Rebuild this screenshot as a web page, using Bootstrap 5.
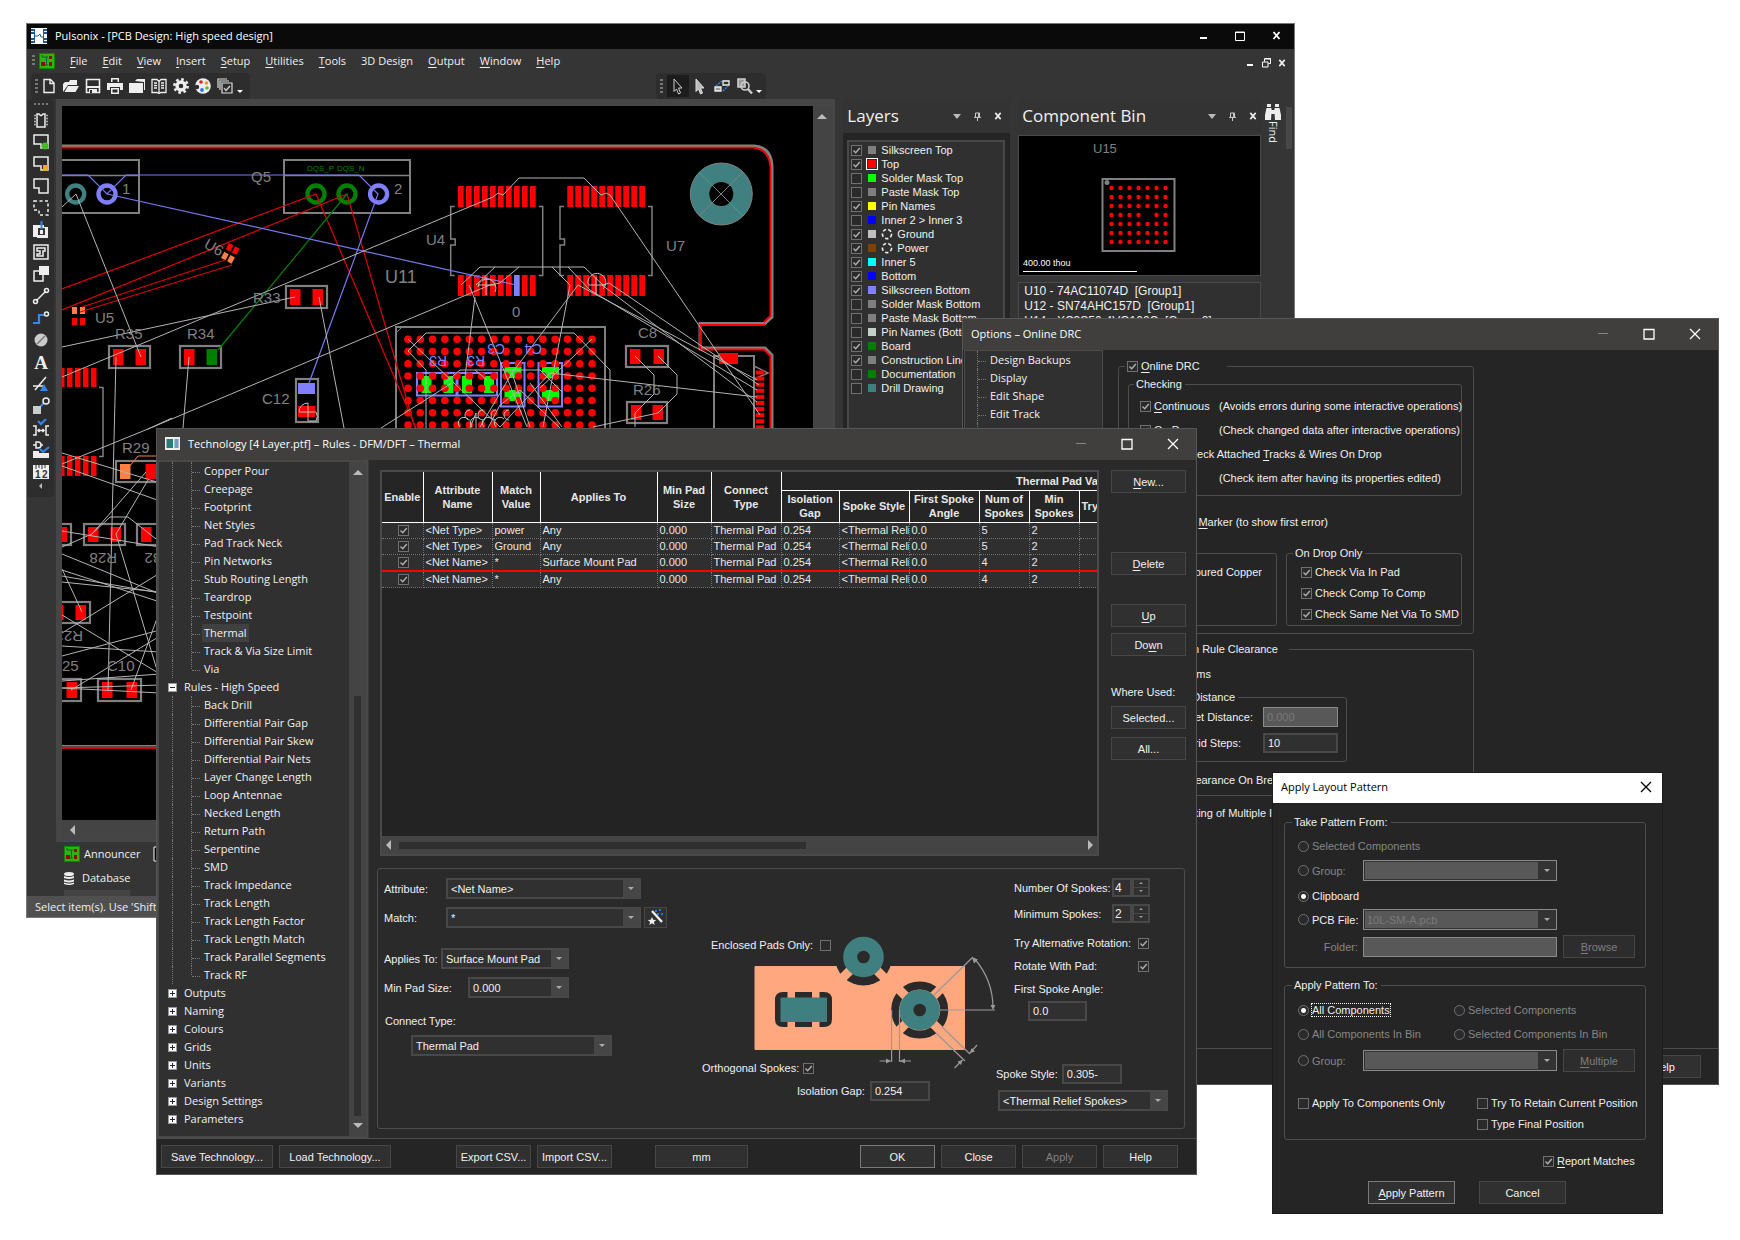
<!DOCTYPE html>
<html lang="en">
<head>
<meta charset="utf-8">
<meta name="viewport" content="width=device-width, initial-scale=1">
<title>Pulsonix</title>
<link href="https://cdn.jsdelivr.net/npm/bootstrap@5.3.0/dist/css/bootstrap.min.css" rel="stylesheet">
<style>
:root{--ui:"Open Sans","Noto Sans",sans-serif;--dlg:"Liberation Sans",Arial,sans-serif}
body{background:#fff;color:#f0f0f0;font-family:var(--dlg);font-size:11px;line-height:12px;min-height:1240px;position:relative;overflow-x:hidden}
svg{display:block;flex:none}
.win{position:absolute;border:1px solid #555;background:#252525}
.win-main{left:26px;right:445px;top:23px;background:#353535;border-color:#777}
.win-opt{left:962px;right:21px;top:318px}
.win-tech{left:156px;right:543px;top:428px;background:#2a2a2a}
.win-apply{right:77px;width:391px;top:772px;border-color:#1c1c1c}
.ui{font-family:var(--ui);font-size:11px;line-height:18px}
.tbar{height:31px;padding-bottom:2px;background:#403f3e;font-family:var(--ui);font-size:11px;color:#fff}
.win-main>.tbar{height:25px;background:#0a0a0a}
.win-apply>.tbar{height:30px;background:#fff;color:#000}
.wbtn{background:none;border:0;padding:0;color:inherit;display:flex;align-items:center;justify-content:center;width:16px;height:16px}
.caps{display:flex;gap:30px;margin-right:7px}
.win-main .caps{gap:20px;margin-right:10px}
.menubar{height:24px;font-family:var(--ui);font-size:11px;gap:15px;padding-left:5px}
.menubar a,.tree a{color:#f0f0f0;text-decoration:none}
u{text-underline-offset:2px}
.strip{background:#2d2d2d;border-radius:4px}
.tools{height:26px}
.vtools{width:27px;height:398px}
.vtools .wbtn,.tools .wbtn{width:22px;height:22px}
.grip{width:3px;height:15px;background:repeating-linear-gradient(#777 0 2px,transparent 2px 4px)}
.gript{height:2px;width:14px;background:repeating-linear-gradient(90deg,#777 0 2px,transparent 2px 4px)}
.frame{background:#464646;padding:7px 3px 3px 6px}
.board{background:#000;min-width:0}
.board text{font-family:var(--dlg)}
.sb{background:#444}
.pane-h{height:34px;font-family:var(--ui);font-size:17px;background:#333}
.layers{width:167px;background:#252525}
.llist{border:2px solid #484848;background:#303030;margin:7px 5px 0 4px;padding:1px 2px}
.llist label{display:flex;align-items:center;height:14px;white-space:nowrap;overflow:hidden;font-size:11px}
.sw{width:8px;height:8px;margin:0 5px 0 6px;flex:none}
.sw.cur{outline:1px solid #fff;outline-offset:1px}
.ck,.rd{appearance:none;width:11px;height:11px;border:1px solid #707070;background:#2a2a2a center/9px no-repeat;margin:0;flex:none;display:inline-block;vertical-align:middle}
.ck:checked{background-image:url("data:image/svg+xml,%3Csvg xmlns='http://www.w3.org/2000/svg' viewBox='0 0 9 9'%3E%3Cpath d='M1.5 4.5l2.2 2.2L7.8 2' fill='none' stroke='%23b0b0b0' stroke-width='1.4'/%3E%3C/svg%3E")}
.rd{border-radius:50%}
.rd:checked{background-image:radial-gradient(#fff 0 2px,transparent 3px)}
.ckl{display:flex;align-items:center;gap:3px;height:12px;white-space:nowrap;flex-shrink:0}
.dim{color:#868686}
.btnx{background:#303030;border:1px solid #464646;border-radius:0;color:#f0f0f0;font-family:var(--dlg);font-size:11px;line-height:14px;height:23px;padding:0 2px;white-space:nowrap}
.btnx.def{border-color:#7a7a7a}
.btnx:disabled{color:#7f7f7f;opacity:1;border-color:#464646;background:#2d2d2d}
.w75{width:75px}
.inx,.selx{background:#303030;border:2px solid #484848;border-radius:0;color:#f0f0f0;font-family:var(--dlg);font-size:11px;line-height:14px;height:20px;padding:0 3px;min-width:0}
.inx:disabled,.selx:disabled{background-color:#585858;border:1px solid #8a8a8a;color:#7a7a7a;opacity:1}
.selx{appearance:none;height:21px;background:linear-gradient(#464646,#464646) right/16px 100% no-repeat,#303030}
.selx:disabled{background:linear-gradient(#333,#333) right/18px 100% no-repeat,#585858;box-shadow:inset 0 0 0 1px #333}
.selw{position:relative;display:flex}
.selw::after{content:"";position:absolute;right:7px;top:9px;border:3px solid transparent;border-top-color:#aaa;border-bottom:0}
.selw>select{width:100%}
.spin{background:#484848;padding:2px;height:19px}
.spin input{width:16px;height:15px;border:0;background:#303030;color:#f0f0f0;padding:0 1px;font-size:12px;appearance:textfield}
.spin i{display:block;width:14px;height:7px;background:#303030;position:relative}
.spin i::after{content:"";position:absolute;left:5px;top:2px;border:2px solid transparent;border-top-color:#999;border-bottom:0}
.spin i.up::after{border:2px solid transparent;border-bottom-color:#999;border-top:0}
.gb{border:1px solid #4c4c4c;border-radius:3px;min-width:0}
.gb>legend{float:none;width:auto;font-size:11px;line-height:12px;margin:0 0 0 7px;padding:0 3px 0 2px}
.gb>legend span.hid{display:inline-block;text-align:right}
/* trees */
.tree{margin:0;padding:0;list-style:none;font-family:var(--ui);font-size:11px;line-height:18px;white-space:nowrap}
.tree li{height:18px;display:flex;align-items:center}
.tree .kid{padding-left:13px}
.tree .kid::before{content:"";align-self:stretch;width:1px;border-left:1px dotted #777;margin-right:18px}
.tree .br{align-self:stretch;border-left:1px dotted #777;width:11px;position:relative}
.tree .br::after{content:"";position:absolute;left:0;right:2px;top:10px;border-top:1px dotted #777}
.tree .kid.end .br{border-left-color:transparent;background:repeating-linear-gradient(#777 0 1px,transparent 1px 2px) 0 0/1px 10px no-repeat border-box}
.tree .flat{padding-left:12px}
.tree .top{padding-left:9px}
.exp{width:9px;height:9px;background:#fff;border:1px solid #999;position:relative;margin-right:7px}
.exp::before{content:"";position:absolute;left:1px;right:1px;top:3px;height:1px;background:#225}
.exp.plus::after{content:"";position:absolute;top:1px;bottom:1px;left:3px;width:1px;background:#225}
.tree .on{background:#404040}
.tree a{padding:0 2px}
.tree-opt{width:139px;border:1px solid #4a4a4a;background:#303030;margin:0 1px 1px;flex:none}
.tgrid{border:2px solid #4a4a4a;background:#232323;height:386px;overflow:hidden}
.tgrid table{table-layout:fixed;width:973px;border-collapse:collapse;font-size:11px;line-height:14px;color:#e8e8e8}
.tgrid th{border:1px solid #fff;border-top:0;border-left:0;text-align:center;padding:0;vertical-align:middle;white-space:nowrap;background:#252525}
.tgrid td{height:16px;padding:0 0 0 2px;border-right:1px dotted #777;border-bottom:1px dotted #777;white-space:nowrap;overflow:hidden;line-height:15px;background:#2f2f2f}
.tgrid tr.red td{border-bottom:2px solid #f00}
.hs{height:18px;background:#444}
.tri{width:0;height:0;border:5px solid transparent}
.tri.u{border-bottom-color:#bbb;border-top:0}.tri.d{border-top-color:#bbb;border-bottom:0}
.tri.l{border-right-color:#bbb;border-left:0}.tri.r{border-left-color:#bbb;border-right:0}
.over{display:grid}.over>*{grid-area:1/1}
.foot{border-top:1px solid #4c4c4c;background:#252525;height:36px;padding:6px 0}
.nw{white-space:nowrap}
</style>
</head>
<body>
<svg width="0" height="0" class="position-absolute"><defs>
<symbol id="x" viewBox="0 0 12 12"><path d="M1 1l10 10M11 1L1 11" stroke="currentColor" stroke-width="1.3" fill="none"/></symbol>
<symbol id="xb" viewBox="0 0 9 9"><path d="M1.500 1l6 7M7.500 1L1.500 8" stroke="currentColor" stroke-width="1.800" fill="none"/></symbol>
<symbol id="sq" viewBox="0 0 12 12"><path d="M1 1.5h10v9.5H1z" stroke="currentColor" stroke-width="1.3" fill="none"/></symbol>
<symbol id="pin" viewBox="0 0 9 9"><path d="M2.5 1h4v4M2.5 1v4M5.6 1v4M1 5.4h7M4.5 5v4" stroke="#ccc" fill="none"/></symbol>
<symbol id="pcb" viewBox="0 0 16 16"><path fill="#2fb40e" stroke="#0a8a04" d="M.5.5h15v15H.5z"/><path fill="#900" d="M2 9h4v4H2zM10 3h3v3h-3zM10 9h3v4h-3z"/><path d="M2 3h2v2M6 12h3M7.500 4v8M5 4h4" stroke="#064" fill="none"/></symbol>
<symbol id="ring" viewBox="0 0 12 12"><circle cx="6" cy="6" r="4.6" fill="none" stroke="#eee" stroke-width="1.6" stroke-dasharray="3.4 2.2"/></symbol>
</defs></svg>

<!-- Main application window -->
<section class="win win-main">
 <header class="tbar d-flex align-items-center ps-1">
  <svg width="16" height="16" viewBox="0 0 16 16"><path fill="#fff" d="M0 0h16v16H0z"/><path fill="#1c5a96" d="M0 1h3v2H0zM0 4h3v2H0zM0 10h3v2H0zM0 13h3v2H0zM13 1h3v2h-3zM13 4h3v2h-3zM13 10h3v2h-3zM13 13h3v2h-3zM3 1h1v14H3zM12 1h1v14h-1z"/><path d="M4 8h3l2-2 1 3h2" stroke="#1c5a96" fill="none"/></svg>
  <span class="ms-2 flex-grow-1">Pulsonix - [PCB Design: High speed design]</span>
  <div class="caps"><button class="wbtn" aria-label="Minimize"><svg width="8" height="8"><path fill="#fff" d="M0 5h7v2H0z"/></svg></button>
  <button class="wbtn" aria-label="Maximize"><svg width="10" height="10"><path fill="none" stroke="#fff" d="M.5 1h9v8.500h-9zM0 1.500h10"/></svg></button>
  <button class="wbtn" aria-label="Close"><svg width="9" height="9"><use href="#xb"/></svg></button></div>
 </header>
 <nav class="menubar d-flex align-items-center">
  <div class="d-flex align-items-center me-n1"><span class="grip" style="height:12px"></span><svg class="ms-1" width="16" height="16"><use href="#pcb"/></svg></div>
  <a href="#"><u>F</u>ile</a><a href="#"><u>E</u>dit</a><a href="#"><u>V</u>iew</a><a href="#"><u>I</u>nsert</a><a href="#"><u>S</u>etup</a><a href="#"><u>U</u>tilities</a><a href="#"><u>T</u>ools</a><a href="#">3D Design</a><a href="#"><u>O</u>utput</a><a href="#"><u>W</u>indow</a><a href="#"><u>H</u>elp</a>
  <div class="ms-auto d-flex pe-1 pt-1"><button class="wbtn" aria-label="Minimize document"><svg width="6" height="8"><path fill="#fff" d="M0 5h6v2H0z"/></svg></button><button class="wbtn" aria-label="Restore document"><svg width="9" height="10"><path fill="none" stroke="#fff" d="M2.500 3.500V.5h6v5h-2M.5 4h5.500v5H.5zM3 1h6"/></svg></button><button class="wbtn" aria-label="Close document"><svg width="8" height="8"><use href="#xb"/></svg></button></div>
 </nav>
 <div class="tools d-flex">
  <div class="strip d-flex align-items-center ps-1 ms-1" style="width:219px"><span class="grip"></span>
   <button class="wbtn" aria-label="New"><svg width="16" height="16" fill="none" stroke="#eee" stroke-width="1.400"><path d="M3 1.500h6.500l3.500 3.500v9.500H3zM9 1.500V5.500h4"/></svg></button>
   <button class="wbtn" aria-label="Open"><svg width="16" height="16" fill="#eee"><path d="M0 14V6l2-2h4l1-2h7v5H5zM1.500 14L5 8h11l-3.500 6z"/></svg></button>
   <button class="wbtn" aria-label="Save"><svg width="16" height="16" fill="none" stroke="#eee" stroke-width="1.600"><path d="M1.500 1.500h13v13h-13z"/><path fill="#eee" stroke="none" d="M2 8h12v2H2zM4 11h8v3H4z"/><path stroke="none" fill="#2d2d2d" d="M5 12h2v3H5z"/></svg></button>
   <button class="wbtn" aria-label="Print"><svg width="16" height="16" fill="#eee"><path d="M4 0h8v4H4zM0 5h16v7h-3V9H3v3H0zM4 10h8v6H4z"/><path fill="#2d2d2d" d="M5.500 1.500h5V4h-5zM5.500 11.500h5v3h-5z"/></svg></button>
   <button class="wbtn" aria-label="Library"><svg width="16" height="16" fill="#eee"><path d="M0 5h14v10H0zM6 3l2-2h8v11h-1V4z"/></svg></button>
   <button class="wbtn" aria-label="Report"><svg width="16" height="16" fill="none" stroke="#eee" stroke-width="1.300"><path d="M1 1.500h5l2 2 2-2h5v13h-5l-2 1-2-1H1zM8 3v12M3 5h3M3 7.500h3M3 10h3M10 5h3M10 7.500h3M10 10h3"/></svg></button>
   <button class="wbtn" aria-label="Options"><svg width="16" height="16"><circle cx="8" cy="8" r="4" fill="none" stroke="#eee" stroke-width="3.400"/><circle cx="8" cy="8" r="6.600" fill="none" stroke="#eee" stroke-width="2.600" stroke-dasharray="2.600 2.580"/></svg></button>
   <button class="wbtn" aria-label="Colours"><svg width="16" height="16"><circle cx="8" cy="8" r="7.800" fill="#eee"/><circle cx="6" cy="4" r="1.800" fill="#d22"/><circle cx="11.500" cy="5" r="1.800" fill="#e90"/><circle cx="12" cy="10" r="1.800" fill="#6b2"/><circle cx="7" cy="12" r="1.900" fill="#27e"/><circle cx="2" cy="9" r="2.200" fill="#2d2d2d"/></svg></button>
   <button class="wbtn" aria-label="Checks"><svg width="16" height="16" fill="none" stroke="#ddd" stroke-width="1.200"><path d="M5 5h10v10H5zM3 12V3h9M1 10V1h9M7 10l2 2.500L13 8"/></svg></button>
   <svg width="8" height="16"><path fill="#fff" d="M1 12h6l-3 3z"/></svg>
  </div>
  <div class="strip d-flex align-items-center ps-1" style="width:110px;margin-left:406px"><span class="grip me-1"></span>
   <button class="wbtn" style="background:#1c1c1c" aria-label="Select"><svg width="12" height="17" fill="#1c1c1c" stroke="#ccc"><path d="M2 1l8 9H6.500l2 5-2 1-2-5L2 13.500z"/></svg></button>
   <button class="wbtn" aria-label="Move"><svg width="12" height="17" fill="#bbb" stroke="#ddd"><path d="M2 1l8 9H6.500l2 5-2 1-2-5L2 13.500z"/></svg></button>
   <button class="wbtn" aria-label="Connect"><svg width="16" height="14" fill="none" stroke="#eee" stroke-width="1.300"><path d="M9 2h6v4H9z"/><path fill="#999" d="M1 8h6v4H1z"/><path stroke="#38e" stroke-dasharray="2 1" d="M2 7l6-5M9 12l5-5"/></svg></button>
   <button class="wbtn" aria-label="Zoom"><svg width="17" height="17" fill="none" stroke="#ccc" stroke-width="1.600"><path fill="#999" d="M2 1h7v8H2z"/><circle cx="9" cy="8" r="4"/><path stroke-width="2.400" d="M12 11l4 4.500"/></svg></button>
   <svg width="8" height="16"><path fill="#fff" d="M1 12h6l-3 3z"/></svg>
  </div>
 </div>
 <div class="d-flex">
  <div class="me-1" style="width:25px">
   <div class="strip vtools d-flex flex-column align-items-center pt-1"><span class="gript"></span>
   <div id="vt" class="d-flex flex-column pt-1"></div>
   <span class="tri l" style="border-width:3px"></span></div>
  </div>
  <div class="flex-grow-1 d-flex flex-column" style="min-width:0">
   <div class="frame d-flex">
    <div class="flex-grow-1" style="min-width:0">
     <svg class="board w-100" id="board" height="714" viewBox="62 106 752 714" preserveAspectRatio="xMinYMin slice"></svg>
     <div class="sb d-flex align-items-center ps-1" style="height:19px"><span class="tri l ms-1"></span></div>
    </div>
    <div class="sb pt-1 ps-1" style="width:19px"><span class="tri u d-block mt-1"></span></div>
   </div>
   <div class="d-flex align-items-center ui ps-2" style="height:18px;margin-top:3px"><svg width="16" height="16"><use href="#pcb"/></svg><span class="ms-1">Announcer</span><svg class="ms-2 ps-1" width="20" height="16" fill="#000" stroke="#fff"><path d="M1 1h14v14H1zM4 4h3v3H4zM4 10h3v3H4z"/></svg></div>
   <div class="d-flex align-items-center ui ps-2 pt-1" style="margin-top:2px"><svg width="10" height="13" fill="#eee"><ellipse cx="5" cy="2" rx="5" ry="2"/><path d="M0 4q5 2 10 0v2q-5 2-10 0zM0 7.500q5 2 10 0v2q-5 2-10 0zM0 10.500q5 2 10 0v1.500q-5 2-10 0z"/></svg><span class="ms-1 ps-1">Database</span></div>
   <div class="ms-2" style="width:66px;height:6px;background:#444;margin-top:3px"></div>
  </div>
  <aside class="layers ms-2" style="height:797px">
   <div class="pane-h d-flex align-items-center ps-1 pe-1"><span class="flex-grow-1">Layers</span><span class="tri d me-1" style="border-width:5px 4px"></span><svg class="ms-2 me-1" width="9" height="9"><use href="#pin"/></svg><button class="wbtn ms-1" aria-label="Close layers"><svg width="8" height="8"><use href="#xb"/></svg></button></div>
   <div class="llist" id="layers">
    <label><input class="ck" type="checkbox" checked><span class="sw" style="background:#808080"></span>Silkscreen Top</label>
    <label><input class="ck" type="checkbox" checked><span class="sw cur" style="background:#f00"></span>Top</label>
    <label><input class="ck" type="checkbox"><span class="sw" style="background:#0f0"></span>Solder Mask Top</label>
    <label><input class="ck" type="checkbox"><span class="sw" style="background:#808080"></span>Paste Mask Top</label>
    <label><input class="ck" type="checkbox" checked><span class="sw" style="background:#ff0"></span>Pin Names</label>
    <label><input class="ck" type="checkbox"><span class="sw" style="background:#00f"></span>Inner 2 &gt; Inner 3</label>
    <label><input class="ck" type="checkbox" checked><span class="sw" style="background:#c0c0c0"></span><svg class="me-1" width="12" height="12"><use href="#ring"/></svg>Ground</label>
    <label><input class="ck" type="checkbox" checked><span class="sw" style="background:#804000"></span><svg class="me-1" width="12" height="12"><use href="#ring"/></svg>Power</label>
    <label><input class="ck" type="checkbox" checked><span class="sw" style="background:#0ff"></span>Inner 5</label>
    <label><input class="ck" type="checkbox" checked><span class="sw" style="background:#00f"></span>Bottom</label>
    <label><input class="ck" type="checkbox" checked><span class="sw" style="background:#8080ff"></span>Silkscreen Bottom</label>
    <label><input class="ck" type="checkbox"><span class="sw" style="background:#808080"></span>Solder Mask Bottom</label>
    <label><input class="ck" type="checkbox"><span class="sw" style="background:#808080"></span>Paste Mask Bottom</label>
    <label><input class="ck" type="checkbox"><span class="sw" style="background:#c0d0c8"></span>Pin Names (Bottom)</label>
    <label><input class="ck" type="checkbox" checked><span class="sw" style="background:#008000"></span>Board</label>
    <label><input class="ck" type="checkbox" checked><span class="sw" style="background:#808080"></span>Construction Lines</label>
    <label><input class="ck" type="checkbox"><span class="sw" style="background:#008000"></span>Documentation</label>
    <label><input class="ck" type="checkbox"><span class="sw" style="background:#408080"></span>Drill Drawing</label>
    <div style="height:230px"></div>
   </div>
  </aside>
  <aside style="width:254px;padding:0 3px 0 8px">
   <div class="pane-h d-flex align-items-center ps-1"><span class="flex-grow-1 nw">Component Bin</span><span class="tri d me-1" style="border-width:5px 4px"></span><svg class="ms-2 me-1" width="9" height="9"><use href="#pin"/></svg><button class="wbtn ms-1" aria-label="Close component bin"><svg width="8" height="8"><use href="#xb"/></svg></button></div>
   <svg class="w-100" style="margin-top:2px" id="bin" height="141" viewBox="1018 135 243 141" preserveAspectRatio="xMinYMin slice"></svg>
   <div style="border:1px solid #4a4a4a;background:#303030;height:140px;font-size:12px;line-height:15px;margin-top:6px;padding:1px 0 0 5px"><div class="nw">U10 - 74AC11074D&nbsp; [Group1]</div><div class="nw">U12 - SN74AHC157D&nbsp; [Group1]</div><div class="nw">U14 - XC3S50-4VQ100C&nbsp; [Group2]</div></div>
  </aside>
  <div style="width:30px" class="d-flex pt-1">
   <div class="d-flex flex-column align-items-center ui"><svg width="16" height="18" fill="#eee"><path d="M2 1h4v3H2zM10 1h4v3h-4zM1.500 5h5v5l-.5 7H0v-5zM9.500 5h5l1.500 7v5h-6l-.5-7zM6.500 7h3v4h-3z"/></svg><span style="writing-mode:vertical-rl">Find</span></div>
   <div style="width:6px;height:42px;background:#484848" class="ms-1 mt-1"></div>
  </div>
 </div>
 <footer class="ui px-2" style="background:#505050;height:21px;line-height:21px">Select item(s). Use 'Shift' to add to the selection</footer>
</section>

<!-- Options window -->
<section class="win win-opt">
 <header class="tbar d-flex align-items-center px-2"><span class="flex-grow-1">Options – Online DRC</span>
  <div class="caps"><button class="wbtn dim" aria-label="Minimize"><svg width="10" height="2"><path fill="currentColor" d="M0 0h10v1H0z"/></svg></button><button class="wbtn" aria-label="Maximize"><svg width="12" height="12"><use href="#sq"/></svg></button><button class="wbtn" aria-label="Close"><svg width="12" height="12"><use href="#x"/></svg></button></div></header>
 <div class="d-flex" style="min-height:698px">
  <ul class="tree tree-opt">
   <li class="flat"><span class="br"></span><a href="#">Design Backups</a></li><li class="flat"><span class="br"></span><a href="#">Display</a></li><li class="flat"><span class="br"></span><a href="#">Edit Shape</a></li><li class="flat"><span class="br"></span><a href="#">Edit Track</a></li><li class="flat"><span class="br"></span><a href="#">File Formats</a></li>
  </ul>
  <div style="width:356px;margin:10px 0 0 14px;flex:none">
   <fieldset class="gb" style="padding:0 11px 7px 9px"><legend style="margin-left:-3px"><label class="ckl pe-4 me-n3"><input type="checkbox" class="ck" checked><span><u>O</u>nline DRC</span></label></legend>
    <fieldset class="gb nw" style="margin-top:6px;padding:10px 0 11px 11px"><legend style="margin-left:-6px">Checking</legend>
     <div class="d-flex flex-column" style="gap:12px">
      <div class="d-flex"><label class="ckl" style="width:79px"><input type="checkbox" class="ck" checked><span><u>C</u>ontinuous</span></label><span>(Avoids errors during some interactive operations)</span></div>
      <div class="d-flex"><label class="ckl" style="width:79px"><input type="checkbox" class="ck" checked>On Drop</label><span>(Check changed data after interactive operations)</span></div>
      <label class="ckl" style="margin-left:29px"><input type="checkbox" class="ck" checked><span>Check Attached <u>T</u>racks &amp; Wires On Drop</span></label>
      <div class="d-flex"><label class="ckl" style="width:79px"><input type="checkbox" class="ck" checked>On Edit</label><span>(Check item after having its properties edited)</span></div>
     </div>
    </fieldset>
    <div class="nw text-end" style="margin:20px 134px 19px 0">Place Error <u>M</u>arker (to show first error)</div>
    <div class="d-flex nw" style="gap:9px">
     <fieldset class="gb flex-grow-1" style="padding:7px 14px 0 0"><legend>Check</legend><div class="text-end">Against Poured Copper</div></fieldset>
     <fieldset class="gb d-flex" style="width:176px;padding:7px 0 5px 14px"><legend style="margin-left:-8px">On Drop Only</legend>
      <div class="d-flex flex-column" style="gap:9px"><label class="ckl"><input type="checkbox" class="ck" checked>Check Via In Pad</label><label class="ckl"><input type="checkbox" class="ck" checked>Check Comp To Comp</label><label class="ckl"><input type="checkbox" class="ck" checked>Check Same Net Via To SMD</label></div></fieldset>
    </div>
   </fieldset>
   <fieldset class="gb nw" style="margin-top:9px;padding:13px 0 9px 9px"><legend style="margin-left:0"><span class="hid" style="width:148px;margin-right:8px">Design Rule Clearance</span></legend>
    <div class="text-end" style="width:83px">Between Items</div>
    <fieldset class="gb" style="margin-top:11px;width:219px;padding:4px 8px 8px 0"><legend style="margin-left:0"><span class="hid" style="width:104px">Report Distance</span></legend>
     <div class="d-flex align-items-center justify-content-end" style="gap:10px;margin-bottom:6px"><label for="nd">Net Distance:</label><input id="nd" class="inx" style="width:75px" value="0.000" disabled></div>
     <div class="d-flex align-items-center justify-content-end"><label for="gs" style="margin-right:22px">Grid Steps:</label><input id="gs" class="inx" style="width:75px" value="10"></div>
    </fieldset>
    <div style="margin:12px 0 0 57px">Clearance On Breakouts</div>
   </fieldset>
   <div class="nw" style="margin:11px 0 0 49px">Checking of Multiple Items</div>
  </div>
 </div>
 <footer class="foot d-flex justify-content-end" style="padding-right:17px"><button class="btnx w75">Help</button></footer>
</section>

<!-- Technology window -->
<section class="win win-tech">
 <header class="tbar d-flex align-items-center px-2"><svg width="15" height="13"><path fill="#eee" d="M0 0h15v13H0z"/><path fill="#2b7a78" d="M1.500 2H8v9H1.500z"/><path fill="#79b" d="M9.500 2h4v9h-4z"/></svg><span class="flex-grow-1 ps-1 ms-1">Technology [4 Layer.ptf] – Rules - DFM/DFT – Thermal</span>
  <div class="caps"><button class="wbtn dim" aria-label="Minimize"><svg width="10" height="2"><path fill="currentColor" d="M0 0h10v1H0z"/></svg></button><button class="wbtn" aria-label="Maximize"><svg width="12" height="12"><use href="#sq"/></svg></button><button class="wbtn" aria-label="Close"><svg width="12" height="12"><use href="#x"/></svg></button></div></header>
 <div class="d-flex" style="height:678px">
  <div class="d-flex" style="width:211px;border:2px solid #484848;background:#303030;flex:none">
   <ul class="tree flex-grow-1 overflow-hidden" id="tree">
    <li class="kid"><span class="br"></span><a href="#">Copper Pour</a></li><li class="kid"><span class="br"></span><a href="#">Creepage</a></li><li class="kid"><span class="br"></span><a href="#">Footprint</a></li><li class="kid"><span class="br"></span><a href="#">Net Styles</a></li><li class="kid"><span class="br"></span><a href="#">Pad Track Neck</a></li><li class="kid"><span class="br"></span><a href="#">Pin Networks</a></li><li class="kid"><span class="br"></span><a href="#">Stub Routing Length</a></li><li class="kid"><span class="br"></span><a href="#">Teardrop</a></li><li class="kid"><span class="br"></span><a href="#">Testpoint</a></li><li class="kid"><span class="br"></span><a href="#" class="on">Thermal</a></li><li class="kid"><span class="br"></span><a href="#">Track &amp; Via Size Limit</a></li><li class="kid end"><span class="br"></span><a href="#">Via</a></li>
    <li class="top"><span class="exp"></span><a href="#" class="p-0">Rules - High Speed</a></li>
    <li class="kid"><span class="br"></span><a href="#">Back Drill</a></li><li class="kid"><span class="br"></span><a href="#">Differential Pair Gap</a></li><li class="kid"><span class="br"></span><a href="#">Differential Pair Skew</a></li><li class="kid"><span class="br"></span><a href="#">Differential Pair Nets</a></li><li class="kid"><span class="br"></span><a href="#">Layer Change Length</a></li><li class="kid"><span class="br"></span><a href="#">Loop Antennae</a></li><li class="kid"><span class="br"></span><a href="#">Necked Length</a></li><li class="kid"><span class="br"></span><a href="#">Return Path</a></li><li class="kid"><span class="br"></span><a href="#">Serpentine</a></li><li class="kid"><span class="br"></span><a href="#">SMD</a></li><li class="kid"><span class="br"></span><a href="#">Track Impedance</a></li><li class="kid"><span class="br"></span><a href="#">Track Length</a></li><li class="kid"><span class="br"></span><a href="#">Track Length Factor</a></li><li class="kid"><span class="br"></span><a href="#">Track Length Match</a></li><li class="kid"><span class="br"></span><a href="#">Track Parallel Segments</a></li><li class="kid end"><span class="br"></span><a href="#">Track RF</a></li>
    <li class="top"><span class="exp plus"></span><a href="#" class="p-0">Outputs</a></li><li class="top"><span class="exp plus"></span><a href="#" class="p-0">Naming</a></li><li class="top"><span class="exp plus"></span><a href="#" class="p-0">Colours</a></li><li class="top"><span class="exp plus"></span><a href="#" class="p-0">Grids</a></li><li class="top"><span class="exp plus"></span><a href="#" class="p-0">Units</a></li><li class="top"><span class="exp plus"></span><a href="#" class="p-0">Variants</a></li><li class="top"><span class="exp plus"></span><a href="#" class="p-0">Design Settings</a></li><li class="top"><span class="exp plus"></span><a href="#" class="p-0">Parameters</a></li>
   </ul>
   <div class="sb d-flex flex-column align-items-center py-2" style="width:17px"><span class="tri u"></span><div style="width:7px;flex:1;margin:221px 0 7px;background:#303030"></div><span class="tri d"></span></div>
  </div>
  <div class="flex-grow-1 ps-2" style="min-width:0;border-left:1px solid #3a3a3a">
   <div class="d-flex" style="padding:10px 10px 0 3px">
    <div class="tgrid flex-grow-1 d-flex flex-column" style="min-width:0">
     <div class="flex-grow-1 overflow-hidden">
     <table><colgroup><col style="width:41px"><col style="width:69px"><col style="width:48px"><col style="width:117px"><col style="width:54px"><col style="width:70px"><col style="width:58px"><col style="width:70px"><col style="width:70px"><col style="width:50px"><col style="width:50px"><col style="width:276px"></colgroup>
      <thead><tr style="height:18px"><th rowspan="2">Enable</th><th rowspan="2">Attribute<br>Name</th><th rowspan="2">Match<br>Value</th><th rowspan="2">Applies To</th><th rowspan="2">Min Pad<br>Size</th><th rowspan="2">Connect<br>Type</th><th colspan="6">Thermal Pad Values</th></tr>
      <tr style="height:32px"><th>Isolation<br>Gap</th><th>Spoke Style</th><th>First Spoke<br>Angle</th><th>Num of<br>Spokes</th><th>Min<br>Spokes</th><th class="text-start" style="padding-left:2px">Try Alternative Rotation</th></tr></thead>
      <tbody>
      <tr><td class="text-center"><input class="ck" type="checkbox" checked aria-label="Enable"></td><td>&lt;Net Type&gt;</td><td>power</td><td>Any</td><td>0.000</td><td>Thermal Pad</td><td>0.254</td><td>&lt;Thermal Reli</td><td>0.0</td><td>5</td><td>2</td><td></td></tr>
      <tr><td class="text-center"><input class="ck" type="checkbox" checked aria-label="Enable"></td><td>&lt;Net Type&gt;</td><td>Ground</td><td>Any</td><td>0.000</td><td>Thermal Pad</td><td>0.254</td><td>&lt;Thermal Reli</td><td>0.0</td><td>5</td><td>2</td><td></td></tr>
      <tr class="red"><td class="text-center"><input class="ck" type="checkbox" checked aria-label="Enable"></td><td>&lt;Net Name&gt;</td><td>*</td><td>Surface Mount Pad</td><td>0.000</td><td>Thermal Pad</td><td>0.254</td><td>&lt;Thermal Reli</td><td>0.0</td><td>4</td><td>2</td><td></td></tr>
      <tr><td class="text-center"><input class="ck" type="checkbox" checked aria-label="Enable"></td><td>&lt;Net Name&gt;</td><td>*</td><td>Any</td><td>0.000</td><td>Thermal Pad</td><td>0.254</td><td>&lt;Thermal Reli</td><td>0.0</td><td>4</td><td>2</td><td></td></tr>
      </tbody></table></div>
     <div class="hs d-flex align-items-center px-1 flex-shrink-0"><span class="tri l me-2"></span><div style="width:407px;height:7px;background:#303030"></div><span class="tri r ms-auto"></span></div>
    </div>
    <div class="d-flex flex-column" style="width:75px;margin-left:12px;flex:none">
     <button class="btnx"><u>N</u>ew...</button><button class="btnx" style="margin-top:59px"><u>D</u>elete</button><button class="btnx" style="margin-top:29px"><u>U</u>p</button><button class="btnx" style="margin-top:6px">Do<u>w</u>n</button>
     <span style="margin-top:30px" class="nw">Where Used:</span><button class="btnx mt-2">Selected...</button><button class="btnx mt-2">All...</button>
    </div>
   </div>
   <div class="gb d-flex nw" style="margin:12px 11px 0 0;height:261px">
    <div style="width:324px;padding:9px 0 0 6px;flex:none">
     <div class="d-flex align-items-center"><label for="at" style="width:62px">Attribute:</label><div class="selw" style="width:195px"><select id="at" class="selx"><option>&lt;Net Name&gt;</option></select></div></div>
     <div class="d-flex align-items-center mt-2"><label for="ma" style="width:62px">Match:</label><div class="selw" style="width:195px"><select id="ma" class="selx"><option>*</option></select></div><button class="btnx p-0 d-flex align-items-center justify-content-center" style="width:23px;height:21px;margin-left:3px" aria-label="Wizard"><svg width="17" height="17"><path d="M5 2l10 11" stroke="#eee" stroke-width="2.400"/><path fill="#eee" d="M5 8l1.200 2.800 3 .2-2.300 2 .8 3L5 14.300 2.300 16l.8-3L.8 11l3-.2z"/><path fill="#27e" d="M8 1h2v2H8zM12 0h2v2h-2zM10 4h2v2h-2zM14 4h2v2h-2z"/></svg></button></div>
     <div class="d-flex align-items-center" style="margin-top:20px"><label for="ap" style="width:57px">Applies To:</label><div class="selw" style="width:128px"><select id="ap" class="selx"><option>Surface Mount Pad</option></select></div></div>
     <div class="d-flex align-items-center mt-2"><label for="mp" style="width:84px">Min Pad Size:</label><div class="selw" style="width:101px"><select id="mp" class="selx"><option>0.000</option></select></div></div>
     <label for="ct" class="d-block" style="margin:17px 0 8px 1px">Connect Type:</label>
     <div class="selw" style="width:201px;margin-left:27px"><select id="ct" class="selx"><option>Thermal Pad</option></select></div>
    </div>
    <div class="over" style="width:294px;flex:none">
     <svg width="294" height="250" viewBox="702 869 294 250" style="overflow:visible">
      <rect x="754.500" y="966" width="210.500" height="84" rx="1" fill="#ffa880"/>
      <circle cx="919.700" cy="1010" r="24.500" fill="none" stroke="#2a2a2a" stroke-width="8"/>
      <circle cx="863.500" cy="957" r="28.500" fill="#2a2a2a"/>
      <path d="M775 1000q0-8 8-8h41q8 0 8 8v19q0 8-8 8h-41q-8 0-8-8z" fill="#2a2a2a"/>
      <path fill="#ffa880" d="M787.500 991h7.500v37h-7.500zM812 991h7.500v37H812z"/>
      <g stroke="#ffa880" stroke-width="9"><path d="M899 989.500l41 41M940 989.500l-41 41M863.500 957l22 22M863.500 957l-22 22"/></g>
      <path fill="#407f80" d="M780.500 997.500h46.500v24.500h-46.500z"/>
      <g fill="#2a2a2a" stroke="#407f80" stroke-width="14"><circle cx="863.500" cy="957" r="13.300"/><circle cx="919.700" cy="1010" r="13.300"/></g>
      <g stroke="#999" fill="none" stroke-width="1.200"><path d="M891.600 1010v52M899.500 1010v52M879.500 1061h11M911 1061h-11M934 995l39-38M940 1010h55M974 958q19 22 19 50M936 1033l29 28M942 1027l28 27M977 1045l-7 8M954.500 1068l8-8"/></g>
      <path fill="#999" d="M891 1061l-5-2.500v5zM900 1061l5-2.500v5zM993 1010l-2.500-5h5zM972 957.500l6 2-4 4zM970 1053l1.500-5 3.500 3.500zM962.500 1060l-5 1.500 3.500 3.500z"/>
     </svg>
     <div style="padding-top:70px"><label class="ckl" style="gap:7px;margin-left:9px">Enclosed Pads Only:<input type="checkbox" class="ck"></label>
      <label class="ckl" style="gap:4px;margin-top:111px">Orthogonal Spokes:<input type="checkbox" class="ck" checked></label>
      <div class="d-flex align-items-center" style="margin:7px 0 0 95px;gap:5px"><label for="ig">Isolation Gap:</label><input id="ig" class="inx" style="width:60px" value="0.254"></div></div>
    </div>
    <div class="flex-grow-1" style="padding-top:9px">
     <div style="width:136px;margin-left:18px">
      <div class="d-flex justify-content-between align-items-center"><label for="ns">Number Of Spokes:</label><span class="spin d-flex" style="gap:4px"><input id="ns" type="text" value="4"><span class="d-flex flex-column justify-content-between"><i class="up"></i><i></i></span></span></div>
      <div class="d-flex justify-content-between align-items-center" style="margin-top:7px"><label for="ms">Minimum Spokes:</label><span class="spin d-flex" style="gap:4px"><input id="ms" type="text" value="2"><span class="d-flex flex-column justify-content-between"><i class="up"></i><i></i></span></span></div>
      <label class="ckl justify-content-between" style="margin-top:14px;padding-right:1px">Try Alternative Rotation:<input type="checkbox" class="ck" checked></label>
      <label class="ckl justify-content-between" style="margin-top:11px;padding-right:1px">Rotate With Pad:<input type="checkbox" class="ck" checked></label>
      <label for="fa" class="d-block" style="margin:11px 0 6px">First Spoke Angle:</label><input id="fa" class="inx" style="width:59px;margin-left:14px" value="0.0">
     </div>
     <div class="d-flex align-items-center" style="margin-top:43px;gap:4px"><label for="ss">Spoke Style:</label><input id="ss" class="inx" style="width:60px" value="0.305-"></div>
     <div class="selw" style="width:170px;margin:6px 0 0 2px"><select class="selx" aria-label="Spoke style"><option>&lt;Thermal Relief Spokes&gt;</option></select></div>
    </div>
   </div>
  </div>
 </div>
 <footer class="foot d-flex" style="padding-left:4px;padding-right:18px">
  <button class="btnx" style="width:112px">Save Technology...</button><button class="btnx" style="width:112px;margin-left:6px">Load Technology...</button>
  <button class="btnx w75" style="margin-left:65px">Export CSV...</button><button class="btnx w75" style="margin-left:6px">Import CSV...</button><button class="btnx" style="width:93px;margin-left:43px">mm</button>
  <div class="ms-auto d-flex" style="gap:6px"><button class="btnx w75 def">OK</button><button class="btnx w75">Close</button><button class="btnx w75" disabled>Apply</button><button class="btnx w75">Help</button></div>
 </footer>
</section>

<!-- Apply Layout Pattern dialog -->
<section class="win win-apply nw">
 <header class="tbar d-flex align-items-center px-2"><span class="flex-grow-1">Apply Layout Pattern</span><button class="wbtn" aria-label="Close"><svg width="12" height="12"><use href="#x"/></svg></button></header>
 <div style="padding:13px 16px 9px 11px">
  <fieldset class="gb" style="height:152px;padding:12px 9px 0 13px"><legend style="margin-left:-6px">Take Pattern From:</legend>
   <label class="ckl dim"><input type="radio" name="src" class="rd">Selected Components</label>
   <div class="d-flex align-items-center" style="margin-top:8px"><label class="ckl dim" style="width:65px"><input type="radio" name="src" class="rd">Group:</label><div class="selw" style="width:194px"><select class="selx" disabled aria-label="Group"><option></option></select></div></div>
   <label class="ckl" style="margin-top:9px"><input type="radio" name="src" class="rd" checked>Clipboard</label>
   <div class="d-flex align-items-center" style="margin-top:7px"><label class="ckl" style="width:65px"><input type="radio" name="src" class="rd">PCB File:</label><div class="selw" style="width:194px"><select class="selx" disabled aria-label="PCB file"><option>10L-SM-A.pcb</option></select></div></div>
   <div class="d-flex align-items-center" style="margin-top:5px"><label for="fo" class="dim text-end" style="width:60px;margin-right:5px">Folder:</label><input id="fo" class="inx" style="width:194px" disabled><button class="btnx" style="width:72px;margin-left:6px" disabled><u>B</u>rowse</button></div>
  </fieldset>
  <fieldset class="gb" style="height:161px;margin-top:11px;padding:13px 9px 0 13px"><legend style="margin-left:-6px">Apply Pattern To:</legend>
   <div class="d-flex"><label class="ckl" style="width:156px"><input type="radio" name="dst" class="rd" checked><span style="outline:1px dotted #fff">All Components</span></label><label class="ckl dim"><input type="radio" name="dst" class="rd">Selected Components</label></div>
   <div class="d-flex" style="margin-top:12px"><label class="ckl dim" style="width:156px"><input type="radio" name="dst" class="rd">All Components In Bin</label><label class="ckl dim"><input type="radio" name="dst" class="rd">Selected Components In Bin</label></div>
   <div class="d-flex align-items-center" style="margin-top:9px"><label class="ckl dim" style="width:65px"><input type="radio" name="dst" class="rd">Group:</label><div class="selw" style="width:194px"><select class="selx" disabled aria-label="Target group"><option></option></select></div><button class="btnx" style="width:72px;margin-left:6px" disabled><u>M</u>ultiple</button></div>
   <div class="d-flex" style="margin-top:25px"><label class="ckl" style="width:179px"><input type="checkbox" class="ck">Apply To Components Only</label><label class="ckl"><input type="checkbox" class="ck">Try To Retain Current Position</label></div>
   <label class="ckl" style="margin:9px 0 0 179px"><input type="checkbox" class="ck">Type Final Position</label>
  </fieldset>
  <label class="ckl" style="margin:15px 0 14px 259px"><input type="checkbox" class="ck" checked><span><u>R</u>eport Matches</span></label>
  <div class="d-flex" style="margin-left:84px;gap:24px"><button class="btnx def" style="width:87px"><u>A</u>pply Pattern</button><button class="btnx" style="width:87px">Cancel</button></div>
 </div>
</section>

<script>
// Side tool strip: one 18px icon per tool
const W='fill="none" stroke="#eee" stroke-width="1.500"';
const tools=[
['Component',`<g ${W} stroke-width="1.300"><path d="M5 3h2l1.500 1.500h1L11 3h2v13H5z"/><path stroke="#aaa" d="M2 4.500h3M2 7.500h3M2 10.500h3M2 13.500h3M13 4.500h3M13 7.500h3M13 10.500h3M13 13.500h3"/></g>`],
['Add pad',`<path ${W} d="M2 2h14v13H9v-4H2z"/><circle cx="13" cy="13" r="3.500" fill="#4b2"/>`],
['Add area',`<path ${W} d="M2 2h14v13H9v-4H2z"/><path fill="#ea2" d="M11 10h5v6h-5z"/>`],
['Shape',`<path ${W} d="M2 2h14v14H7v-5H2z"/>`],
['Region',`<path ${W} stroke-dasharray="3 2.500" d="M2 2h14v14H7v-5H2z"/>`],
['Pour',`<path fill="#eee" d="M1 4h11v12H1zM5 6h11v11H5z"/><path fill="#353535" d="M6 7h7v7H6z"/><path fill="#eee" d="M8 9h3v4H8z"/><path stroke="#38e" stroke-width="2" d="M9.500 0v8"/>`],
['Template',`<path ${W} d="M2 2h14v14H2zM5 5h8v3h-2v5H5v-2h3V8H5z"/>`],
['Cutout',`<path ${W} d="M2 6h9v10H2z"/><path fill="#eee" d="M7 1h10v9H7z"/>`],
['Connection',`<path ${W} d="M4 14L14 4"/><circle ${W} cx="3.500" cy="14.500" r="2"/><circle ${W} cx="14.500" cy="3.500" r="2"/>`],
['Track',`<path fill="none" stroke="#38e" stroke-width="2.200" d="M1 14h6V6h6"/><circle ${W} cx="14.500" cy="5" r="2"/>`],
['Via',`<circle cx="9" cy="9" r="6.500" fill="#ccc"/><path stroke="#777" stroke-width="1.500" d="M5 13l8-8"/>`],
['Text','<text x="9" y="15.500" text-anchor="middle" font-family="Liberation Serif,serif" font-weight="bold" font-size="19" fill="#eee">A</text>'],
['Dimension',`<path ${W} d="M1 11h10M3 15L14 2"/><path fill="#38e" d="M12 9l4 7H8z"/>`],
['Testpoint',`<path stroke="#38e" stroke-width="2" d="M6 12l6-6"/><path fill="#ccc" d="M1 9h8v8H1z"/><circle ${W} cx="14" cy="4" r="3"/>`],
['Spacing',`<path ${W} d="M1 7h3v9H1M17 7h-3v9h3M6 11.500h6M7.500 10L6 11.500 7.500 13M10.500 10l1.500 1.500-1.500 1.500"/><path fill="none" stroke="#38e" stroke-width="2" d="M6 2l3 3 5-5"/>`],
['Check',`<path ${W} d="M1 4h3M9 4h2M4 1h2q3 0 3 3t-3 3H4z"/><path fill="#eee" d="M1 10h6v2h10v5H1z"/><path fill="none" stroke="#38e" stroke-width="2" d="M8 8l3 3 6-5"/>`],
['Measure','<path fill="#eee" d="M1 2h16v14H1z"/><path stroke="#333" d="M4 2v4M7 2v3M10 2v4M13 2v3"/><text x="3" y="15" font-size="10" font-weight="bold" fill="#333">1</text><text x="10" y="15" font-size="10" font-weight="bold" fill="#333">2</text>']];
document.getElementById('vt').innerHTML=tools.map(t=>`<button class="wbtn" aria-label="${t[0]}"><svg width="18" height="18">${t[1]}</svg></button>`).join('');

// Board drawing
const rect=(x,y,w,h,f,s='none',sw=0)=>`<rect x="${x}" y="${y}" width="${w}" height="${h}" fill="${f}" stroke="${s}" stroke-width="${sw}"/>`;
const R='#f00',G='#808080',B='#8080ff',GR='#008000';
let s='';
const out='H754Q771 147 772 166V317L765 323.500H700V348H765L772 355V820';
s+=`<path d="M62 146${out}" fill="none" stroke="#808080" stroke-width="3"/><path d="M62 147.700H753Q769 149 770.500 167V316L764 322" fill="none" stroke="#f00" stroke-width="1.800"/><path d="M765 325H700V349.500H764L770.500 356V820M62 747.700H800" fill="none" stroke="#f00" stroke-width="2"/><path d="M62 745.700H800" stroke="#808080" stroke-width="1.500"/>`;
s+=rect(50,160,89,53,'none',G,2)+rect(284,160,126,53,'none',G,2)+`<path d="M62 175.500H139M284 175.500H410" stroke="${G}" stroke-width="1.500"/>`;
const ring=(x,c)=>`<circle cx="${x}" cy="194" r="8.500" fill="none" stroke="${c}" stroke-width="4.400"/>`;
s+=ring(75.700,'#408080')+ring(107,B)+ring(316,GR)+ring(347,GR)+ring(378.600,B);
// chip resistors and capacitors
const part=(x,y,w,h,a,b)=>rect(x,y,w,h,'none',G,2.200)+rect(x+4,y+3,10.500,h-6,a)+rect(x+w-14.500,y+3,10.500,h-6,b);
s+=part(286,286,41,22,R,R)+part(109,346,41,22,R,R)+part(180,346,41,22,R,GR)+part(626,346,42,21,R,R)+part(627,402,40,21,R,R)+part(116,461,44,21,'#ff8040',R)+part(30,524,41,21,R,R)+part(84,524,41,21,R,R)+part(137,524,41,21,R,R)+part(49,602,41,21,R,R)+part(39,679,42,22,R,R)+part(98,679,43,22,R,R);
s+=rect(296,379,22,43,'none',G,2.200)+rect(298,383,17,11,B)+rect(298,406,17,11,R);
for(let i=0;i<5;i++){s+=rect(59+i*8,368,5.500,19,R)+rect(59+i*8,456,5.500,20,R);}
s+=`<path d="M99 387.500h4v69h-4" fill="none" stroke="${G}" stroke-width="1.500"/>`;
for(const o of [458,567.300]){for(let i=0;i<10;i++)s+=rect(o+i*8,186,5.700,21,R)+rect(o+i*8,275,5.700,21,o===458&&i===7?B:R);
const a=o-7.300;s+=`<path d="M${a+4} 206.500h-4V239h4.500v6h-4.500v30.500h4M${a+88} 206.500h4v69h-4" fill="none" stroke="${G}" stroke-width="1.500"/>`;}
s+=`<circle cx="721.300" cy="194" r="31" fill="#408080" stroke="${G}"/><circle cx="721.300" cy="194" r="12" fill="#000"/><path d="M699 172l44 44M743 172l-44 44" stroke="${G}"/>`;
// ball grid array with bottom-side parts
s+=rect(396,327,209,130,'none',G,2)+`<path d="M396 333l6-6" stroke="${G}"/>`;
for(const [x,w] of [[417,39.500],[457.500,39.500]])s+=rect(x,373,w,22.500,'none',B,2)+rect(x+4.500,376,10,17,'#0f0')+rect(x+w-13,376,10,17,'#0f0');
for(const x of [501,538.500])s+=rect(x,363,23.500,43.500,'none',B,2)+rect(x+3.500,367,17,11,'#0f0')+rect(x+3.500,390,17,11,'#0f0');
for(let r=0;r<8;r++)for(let c=0;c<16;c++)s+=`<circle cx="${408+c*12.270}" cy="${339.300+r*12.250}" r="3.800" fill="#f00"/>`;
// edge connector
s+=rect(714,356,40,90,'none',G,2)+rect(719,353,19,11,R)+`<path d="M754 366l14 7-14 6z" fill="none" stroke="${G}" stroke-width="1.500"/>`;
for(let i=0;i<10;i++)s+=rect(755.700,370.500+i*6.100,8.600,4,R);
s+=`<g transform="rotate(28 231 252)"><path fill="#f00" d="M225 245h5v7h-5zM232 245h5v7h-5z"/><path fill="#ff8040" d="M225 255h5v7h-5zM232 255h5v7h-5z"/></g><path fill="#ff8040" d="M72 307h5v7h-5zM80 307h5v7h-5z"/><path fill="#f00" d="M72 318h5v7h-5zM80 318h5v7h-5z"/>`;
const lines=(c,a,w=1)=>`<g fill="none" stroke="${c}" stroke-width="${w}">${a.map(p=>`<polyline points="${p}"/>`).join('')}</g>`;
s+=lines('#e00000',['62,289 316,194 416,428','62,310 347,194 415,428','225,260 82,307','232,265 80,312'],1.200);
s+=lines('#008000',['347,194 218,350'],1.200);
s+=lines('#7878f0',['62,175 88,175 107,194 126,175 359,175 378,194 309,383','107,194 516,285'],1.200);
s+=lines('#ff8040',['129,467 138,456 160,456']);
s+=lines('#b4b4b4',['62,207 76,194 141,357','62,347 295,297','62,377 493,197 498,193 503,195 519,178 584,178 601,195 606,193 610,195 760,415','148,429 490,285 500,283 519,267',
'461,285 480,267 584,267 603,285 609,283 759,385','476,285 495,267','552,267 570,285 543,427','469,285 527,427','475,297 465,377','578,285 512,373 530,427','578,285 757,380','590,290 757,390','602,285 757,402','568,267 590,290','550,373 757,397','593,427 658,413 677,394 677,375 658,356','635,427 635,413 654,394 654,375 635,356',
'319,297 344,428','116,357 108,690','189,357 183,428','381,428 452,383','62,464 148,429 172,418','408,339 500,427','408,351 426,333 574,333 610,370 610,428','408,351 426,370 426,428','592,339 540,388','530,383 562,427','512,373 480,427','550,373 500,427','445,383 460,370 540,370 562,392','475,370 487,380','470,428 476,413 476,428','488,428 500,405 520,390 560,428',
'62,453 160,483','62,466 160,501','148,480 116,534 160,680','92,534 110,517 128,517 160,542','62,547 92,534 146,472','62,531 160,547','62,554 160,594','62,570 160,602','62,576 160,593','62,582 160,592','62,569 82,612','62,633 160,573','62,615 160,674','62,656 160,630','62,646 160,652','62,681 160,674','62,688 160,685','62,688 160,693','71,690 160,636','131,690 160,610']);
let arcs='';for(let i=0;i<4;i++)arcs+=`M${470+i*13} 420a5 5 0 0 1 0-10M${460+i*12} 427a5 5 0 1 1 8-8`;
s+=`<path d="${arcs}M478 287a9 9 0 1 1 17 5M478 285h17M486 277v18M588 284a9 9 0 1 1 15 5M588 285h17M596 277v18M299 412a9 9 0 0 1 9-9v18h8a9 9 0 0 0 0-9h-17" fill="none" stroke="#c0c0c0"/>`;
const t=(x,y,v,z=15,c=G,r='')=>`<text x="${x}" y="${y}" font-size="${z}" fill="${c}" ${r}>${v}</text>`;
s+=t(122,194,'1')+t(251,182,'Q5')+t(394,194,'2')+t(307,171,'DQS_P',8,GR)+t(337,171,'DQS_N',8,GR)+t(203,247,'U6',15,G,'transform="rotate(30 203 247)"')+t(95,323,'U5')+t(426,245,'U4')+t(666,251,'U7')+t(385,283,'U11',18)+t(512,317,'0')+t(253,303,'R33')+t(115,339,'R35')+t(187,339,'R34')+t(262,404,'C12')+t(638,338,'C8')+t(633,395,'R26')+t(122,453,'R29')+t(62,671,'25')+t(107,671,'C10');
const f=(x,y,v,c,z=15)=>`<text transform="translate(${x} ${y}) rotate(180)" font-size="${z}" fill="${c}">${v}</text>`;
s+=f(117,553,'R28',G)+f(172,553,'R32',G)+f(83,631,'R22',G)+f(447,356,'R3',B,14)+f(485,356,'R3',B,14)+f(505,344,'C3',B,14)+f(542,344,'C4',B,14);
document.getElementById('board').innerHTML=s;

// Component preview
let p=rect(1018.500,135.500,242,140,'#000','#4a4a4a',1)+rect(1102.500,179,72,72,'none',G,2)+`<circle cx="1107" cy="182.500" r="2.500" fill="${G}"/>`;
for(let r=0;r<7;r++)for(let c=0;c<7;c++)if(!(r===3&&c===4))p+=`<circle cx="${1111.500+c*9}" cy="${188+r*9}" r="2.200" fill="#f00"/>`;
p+=t(1093,153,'U15',13)+t(1023,266,'400.00 thou',9,'#fff')+`<path d="M1023 271.500H1137" stroke="#fff"/>`;
document.getElementById('bin').innerHTML=p;
</script>
<script src="https://cdn.jsdelivr.net/npm/bootstrap@5.3.0/dist/js/bootstrap.bundle.min.js"></script>
</body>
</html>
